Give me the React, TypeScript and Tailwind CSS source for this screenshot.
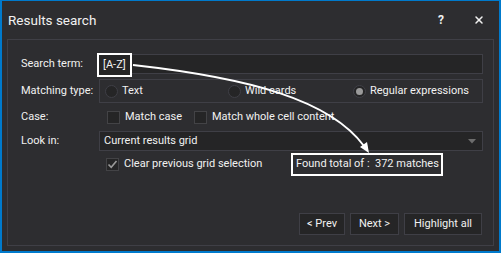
import { X } from "lucide-react";

const font = { fontFamily: 'Roboto, "Noto Sans", sans-serif' };

function Radio({ label, checked, className }: { label: string; checked?: boolean; className?: string }) {
  return (
    <div className={`flex items-center gap-[4px] ${className ?? ""}`}>
      <span className="w-[13px] h-[13px] rounded-full border border-[#3f3f46] bg-[#252526] flex items-center justify-center">
        {checked && <span className="w-[7px] h-[7px] rounded-full bg-[#9a9a9a]" />}
      </span>
      <span>{label}</span>
    </div>
  );
}

function Checkbox({ label, checked, className }: { label: string; checked?: boolean; className?: string }) {
  return (
    <div className={`flex items-center gap-[5px] whitespace-nowrap ${className ?? ""}`}>
      <span className="w-[13px] h-[13px] shrink-0 border border-[#434346] bg-[#252526] flex items-center justify-center">
        {checked && (
          <svg width="11" height="11" viewBox="0 0 11 11">
            <path d="M1.5 5.5 L4.2 8.3 L9.5 2" fill="none" stroke="#9a9a9a" strokeWidth="1.6" />
          </svg>
        )}
      </span>
      <span>{label}</span>
    </div>
  );
}

export default function App() {
  return (
    <div
      style={font}
      className="relative w-[501px] h-[253px] bg-[#2d2d30] border-x-2 border-b-2 border-t border-[#007acc] flex flex-col text-[11px] text-[#f1f1f1] whitespace-nowrap overflow-hidden"
    >
      {/* Title bar */}
      <div className="h-[38px] flex items-center pl-[6px] pr-[14px] shrink-0">
        <span className="text-[13.5px] text-[#f1f1f1]">Results search</span>
        <span className="ml-auto text-[12px] font-bold mr-[29px]">?</span>
        <X className="w-[12px] h-[12px]" strokeWidth={3} />
      </div>

      {/* Panel */}
      <div className="mx-[5px] h-[207px] border border-[#3f3f46] flex flex-col pl-[13px] pr-[10px]">
        {/* Search term */}
        <div className="flex items-center mt-[14px] h-[20px]">
          <span className="w-[78px] shrink-0">Search term:</span>
          <div className="relative flex-1 h-[20px] bg-[#252526] border border-[#3f3f46]">
            <span className="absolute left-[-3px] top-[-2px] h-[24px] px-[4px] border-2 border-white flex items-center bg-[#252526]">
              [A-Z]
            </span>
          </div>
        </div>

        {/* Matching type */}
        <div className="flex items-center mt-[5px] h-[24px]">
          <span className="w-[78px] shrink-0">Matching type:</span>
          <div className="flex-1 h-[24px] border border-[#3f3f46] flex items-center pl-[5px]">
            <Radio label="Text" className="w-[123px]" />
            <Radio label="Wild cards" className="w-[125px]" />
            <Radio label="Regular expressions" checked />
          </div>
        </div>

        {/* Case */}
        <div className="flex items-center mt-[4px] h-[20px]">
          <span className="w-[86px] shrink-0">Case:</span>
          <Checkbox label="Match case" className="w-[87px]" />
          <Checkbox label="Match whole cell content" />
        </div>

        {/* Look in */}
        <div className="flex items-center mt-[4px] h-[20px]">
          <span className="w-[78px] shrink-0">Look in:</span>
          <div className="flex-1 h-[20px] bg-[#252526] border border-[#3f3f46] flex items-center pl-[4px] pr-[6px]">
            <span>Current results grid</span>
            <svg className="ml-auto" width="8" height="5" viewBox="0 0 8 5">
              <path d="M0 0 H8 L4 4.5 Z" fill="#6d6d6d" />
            </svg>
          </div>
        </div>

        {/* Clear selection + found */}
        <div className="flex items-center mt-[2px] h-[23px]">
          <Checkbox label="Clear previous grid selection" checked className="ml-[85px] w-[185px]" />
          <span className="h-[23px] w-[152px] border-2 border-white px-[3px] flex items-center whitespace-pre">
            Found total of :  372 matches
          </span>
        </div>

        {/* Buttons */}
        <div className="flex justify-end gap-[5px] mt-[37px] pr-[1px]">
          <button className="w-[46px] h-[22px] bg-[#252526] border border-[#3f3f46]">&lt; Prev</button>
          <button className="w-[49px] h-[22px] bg-[#252526] border border-[#3f3f46]">Next &gt;</button>
          <button className="w-[78px] h-[22px] bg-[#252526] border border-[#3f3f46]">Highlight all</button>
        </div>
      </div>

      {/* Annotation arrow */}
      <svg className="absolute left-[-2px] top-[-1px] pointer-events-none" width="501" height="253" viewBox="0 0 501 253">
        <path d="M133 65 C 250 78, 330 100, 364 146" fill="none" stroke="#ffffff" strokeWidth="2" />
        <path d="M360 147 L369 153 L367 142 Z" fill="#ffffff" />
      </svg>
    </div>
  );
}
